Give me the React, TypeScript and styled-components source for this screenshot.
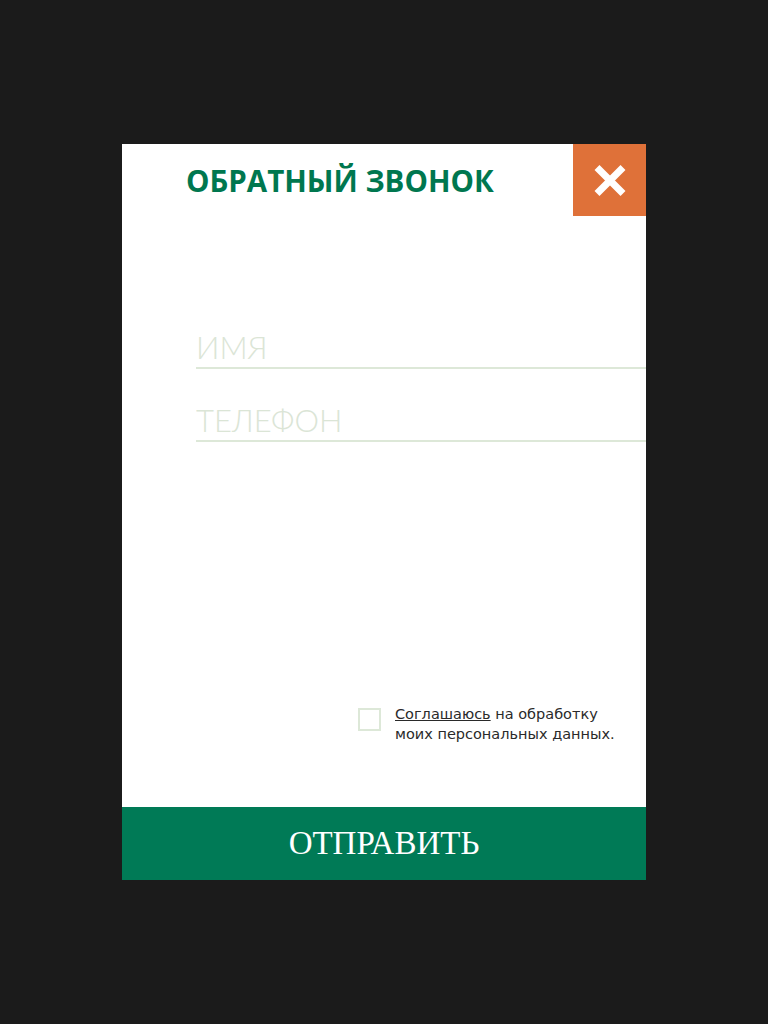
import React, { useState } from "react";
import styled, { createGlobalStyle } from "styled-components";

const GlobalStyle = createGlobalStyle`
  html, body {
    margin: 0;
    padding: 0;
    background: #1b1b1b;
  }
  * {
    box-sizing: border-box;
  }
`;

const App = () => {
  const [name, setName] = useState("");
  const [phone, setPhone] = useState("");
  const [agree, setAgree] = useState(false);

  return (
    <Page>
      <GlobalStyle />
      <Modal>
        <Header>
          <Title>ОБРАТНЫЙ ЗВОНОК</Title>
          <CloseButton aria-label="Закрыть">
            <svg width="32" height="33" viewBox="0 0 32 33">
              <path
                d="M3 3.5 L29 29.5 M29 3.5 L3 29.5"
                stroke="#fff"
                strokeWidth="7"
                strokeLinecap="butt"
              />
            </svg>
          </CloseButton>
        </Header>
        <Fields>
          <Field
            value={name}
            onChange={(e) => setName(e.target.value)}
            placeholder="ИМЯ"
          />
          <Field
            value={phone}
            onChange={(e) => setPhone(e.target.value)}
            placeholder="ТЕЛЕФОН"
          />
        </Fields>
        <Agreement>
          <Checkbox $checked={agree} onClick={() => setAgree(!agree)} />
          <AgreeText>
            <Underlined>Соглашаюсь</Underlined> на обработку
            <br />
            моих персональных данных.
          </AgreeText>
        </Agreement>
        <Submit>ОТПРАВИТЬ</Submit>
      </Modal>
    </Page>
  );
};

export default App;

const Page = styled.div`
  width: 100%;
  min-height: 1024px;
  display: flex;
  justify-content: center;
  align-items: center;
`;
const Modal = styled.div`
  width: 524px;
  height: 736px;
  background: #fff;
  display: flex;
  flex-direction: column;
`;
const Header = styled.div`
  height: 72px;
  display: flex;
  align-items: flex-start;
  justify-content: space-between;
`;
const Title = styled.div`
  padding: 18px 0 0 64px;
  font-family: "Open Sans", sans-serif;
  font-weight: 700;
  font-size: 29.5px;
  line-height: 38px;
  color: #00774f;
`;
const CloseButton = styled.button`
  width: 73px;
  height: 72px;
  border: none;
  padding: 0;
  background: #df7139;
  display: flex;
  justify-content: center;
  align-items: center;
  cursor: pointer;
`;
const Fields = styled.div`
  margin-top: 110px;
  padding-left: 74px;
  display: flex;
  flex-direction: column;
  gap: 30px;
`;
const Field = styled.input`
  width: 100%;
  height: 43px;
  border: none;
  border-bottom: 2px solid #dde8d8;
  outline: none;
  padding: 0;
  font-family: "Lato", sans-serif;
  font-weight: 300;
  font-size: 31px;
  color: #333;
  background: transparent;
  &::placeholder {
    color: #dbe5d6;
  }
`;
const Agreement = styled.div`
  margin-top: auto;
  margin-bottom: 63px;
  padding-left: 236px;
  display: flex;
  align-items: flex-start;
  gap: 14px;
`;
const Checkbox = styled.div<{ $checked: boolean }>`
  width: 23px;
  height: 23px;
  margin-top: 4px;
  flex-shrink: 0;
  border: 2px solid #dde8d8;
  background: ${(p) => (p.$checked ? "#00774f" : "#fff")};
  cursor: pointer;
`;
const AgreeText = styled.div`
  font-family: "DejaVu Sans", sans-serif;
  font-size: 14.5px;
  line-height: 20px;
  color: #2a2a2a;
`;
const Underlined = styled.span`
  text-decoration: underline;
`;
const Submit = styled.button`
  height: 73px;
  border: none;
  background: #007a56;
  color: #fff;
  font-family: "Liberation Serif", serif;
  font-size: 33px;
  cursor: pointer;
`;
